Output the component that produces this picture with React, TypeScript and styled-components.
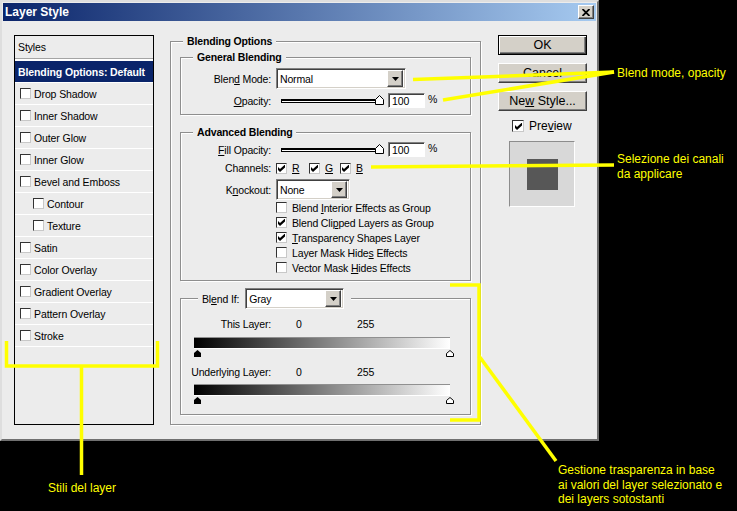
import styled, { createGlobalStyle } from "styled-components";

const GlobalStyle = createGlobalStyle`
  html, body { margin: 0; padding: 0; background: #000; }
  body { font-family: "Liberation Sans", Arial, sans-serif; }
`;

const Page = styled.div`
  position: relative;
  width: 737px;
  height: 511px;
  overflow: hidden;
  background: #000;
`;

const Window = styled.div`
  width: 599px;
  height: 441px;
  box-sizing: border-box;
  padding: 1px;
  background: #ececec;
  border: 2px solid;
  border-color: #dedede #707070 #707070 #dedede;
  display: flex;
  flex-direction: column;
  font-size: 10.5px;
  color: #000;
`;

const TitleBar = styled.div`
  height: 18px;
  display: flex;
  align-items: center;
  justify-content: space-between;
  padding: 0 2px 0 2px;
  background: linear-gradient(to right, #0a246a, #a6caf0);
`;

const Title = styled.span`
  color: #fff;
  font-size: 12px;
  font-weight: bold;
`;

const CloseBtn = styled.div`
  width: 16px;
  height: 14px;
  box-sizing: border-box;
  background: #d4d0c8;
  border: 1px solid;
  border-color: #fff #404040 #404040 #fff;
  box-shadow: inset -1px -1px 0 #808080;
  display: flex;
  align-items: center;
  justify-content: center;
`;

const Body = styled.div`
  flex: 1;
  display: flex;
  align-items: flex-start;
  padding: 14px 0 0 11px;
`;

/* left list of styles */
const StyleList = styled.div`
  width: 140px;
  height: 390px;
  box-sizing: border-box;
  border: 1px solid #000;
  display: flex;
  flex-direction: column;
  letter-spacing: -0.1px;
`;

const ListHeader = styled.div`
  height: 22px;
  display: flex;
  align-items: center;
  padding-left: 3px;
  border-bottom: 1px solid #a4a4a4;
`;

const ListItem = styled.div<{ $selected?: boolean; $indent?: boolean }>`
  height: 21px;
  display: flex;
  align-items: center;
  gap: 3px;
  padding-left: ${(p) => (p.$selected ? 3 : p.$indent ? 18 : 5)}px;
  border-top: ${(p) => (p.$selected ? "2px solid #fff" : "none")};
  border-bottom: 1px solid #fff;
  background: ${(p) => (p.$selected ? "#0a246a" : "transparent")};
  color: ${(p) => (p.$selected ? "#fff" : "#000")};
  font-weight: ${(p) => (p.$selected ? "bold" : "normal")};
`;

/* group boxes */
const Group = styled.fieldset<{ $pad: string; $top?: number }>`
  margin: ${(p) => p.$top ?? 0}px 0 0 0;
  min-width: 0;
  padding: ${(p) => p.$pad};
  border: 1px solid #8e8e8e;
  box-shadow: inset 1px 1px 0 #fff, 1px 1px 0 #fff;
`;

const OuterGroup = styled(Group)`
  width: 311px;
  box-sizing: border-box;
  margin-left: 16px;
  letter-spacing: -0.15px;
`;

const GroupTitle = styled.legend<{ $offset: number }>`
  margin-left: ${(p) => p.$offset}px;
  padding: 0 4px;
  line-height: 12px;
  font-weight: bold;
  background: #ececec;
`;

const BlendIfTitle = styled.legend`
  margin-left: 16px;
  padding: 0 7px 0 4px;
  display: flex;
  align-items: center;
  gap: 6px;
  background: #ececec;
`;

const FormRow = styled.div<{ $top?: number }>`
  display: grid;
  grid-template-columns: 89px auto;
  column-gap: 5px;
  align-items: center;
  margin-top: ${(p) => p.$top ?? 0}px;
`;

const Label = styled.span`
  text-align: right;
  white-space: nowrap;
`;

const Controls = styled.div`
  display: flex;
  align-items: center;
`;

const Key = styled.span`
  text-decoration: underline;
`;

const SelectBox = styled.div<{ $w: number }>`
  width: ${(p) => p.$w}px;
  height: 21px;
  box-sizing: border-box;
  display: flex;
  align-items: center;
  justify-content: space-between;
  background: #fff;
  border: 1px solid;
  border-color: #808080 #fff #fff #808080;
  box-shadow: inset 1px 1px 0 #404040, inset -1px -1px 0 #d4d0c8;
  padding: 2px 2px 2px 3px;
  font-weight: normal;
`;

const DropBtn = styled.div`
  width: 16px;
  height: 17px;
  box-sizing: border-box;
  background: #d4d0c8;
  border: 1px solid;
  border-color: #fff #404040 #404040 #fff;
  box-shadow: inset -1px -1px 0 #808080;
  display: flex;
  align-items: center;
  justify-content: center;
`;

const SliderWrap = styled.div`
  position: relative;
  width: 110px;
  height: 15px;
`;

const Track = styled.div`
  position: absolute;
  left: 5px;
  top: 6px;
  width: 98px;
  height: 4px;
  box-sizing: border-box;
  background: #fff;
  border: 1px solid #000;
  border-top-width: 2px;
`;

const Thumb = styled.svg`
  position: absolute;
  left: 99px;
  top: 2px;
`;

const NumField = styled.div`
  width: 37px;
  height: 15px;
  box-sizing: border-box;
  margin-left: 2px;
  padding: 1px 0 0 3px;
  background: #fff;
  border: 1px solid;
  border-color: #808080 #fff #fff #808080;
  box-shadow: inset 1px 1px 0 #404040;
  display: flex;
  align-items: center;
`;

const Percent = styled.span`
  margin-left: 3px;
  margin-top: -4px;
`;

const CheckBox = styled.span<{ $size: number }>`
  width: ${(p) => p.$size}px;
  height: ${(p) => p.$size}px;
  flex: none;
  box-sizing: border-box;
  background: #fff;
  border: 1px solid;
  border-color: #333 #c8c8c8 #c8c8c8 #333;
  display: flex;
  align-items: center;
  justify-content: center;
`;

const ChannelGrid = styled.div`
  display: grid;
  grid-template-columns: 33px 31px auto;
  height: 12px;
  align-items: center;
`;

const Channel = styled.span`
  display: flex;
  align-items: center;
  gap: 5px;
`;

const CheckList = styled.div`
  padding-left: 94px;
`;

const CheckRow = styled.div`
  height: 15px;
  display: flex;
  align-items: center;
  gap: 5px;
`;

const LevelRow = styled.div<{ $top: number }>`
  height: 14px;
  display: flex;
  align-items: center;
  margin-top: ${(p) => p.$top}px;
`;

const LevelLabel = styled.span`
  width: 89px;
  text-align: right;
  white-space: nowrap;
`;

const LevelValue = styled.span<{ $w: number }>`
  width: ${(p) => p.$w}px;
`;

const Ramp = styled.div<{ $top: number }>`
  width: 256px;
  height: 12px;
  box-sizing: border-box;
  margin: ${(p) => p.$top}px 0 0 12px;
  border-top: 1px solid #909090;
  border-bottom: 1px solid #fff;
  background: linear-gradient(to right, #000, #fff);
`;

const Markers = styled.svg`
  display: block;
  margin: 1px 0 0 12px;
`;

/* right column */
const Side = styled.div`
  width: 89px;
  margin-left: 17px;
  display: flex;
  flex-direction: column;
`;

const Button = styled.div<{ $default?: boolean; $top?: number }>`
  height: 20px;
  box-sizing: border-box;
  margin-top: ${(p) => p.$top ?? 0}px;
  background: #d4d0c8;
  font-size: 12.5px;
  display: flex;
  align-items: center;
  justify-content: center;
  border: 1px solid;
  border-color: ${(p) => (p.$default ? "#000" : "#fff #404040 #404040 #fff")};
  box-shadow: ${(p) =>
    p.$default
      ? "inset 1px 1px 0 #fff, inset -1px -1px 0 #404040, inset -2px -2px 0 #808080"
      : "inset -1px -1px 0 #808080"};
`;

const PreviewRow = styled.div`
  display: flex;
  align-items: center;
  gap: 5px;
  margin: 8px 0 0 14px;
  font-size: 12px;
`;

const PreviewBox = styled.div`
  width: 66px;
  height: 66px;
  box-sizing: border-box;
  margin: 8px 0 0 11px;
  background: #d8d8d8;
  border: 1px solid;
  border-color: #8c8c8c #fff #fff #8c8c8c;
  display: flex;
  align-items: center;
  justify-content: center;
`;

const Swatch = styled.div`
  width: 31px;
  height: 31px;
  background: #575757;
`;

/* yellow notes drawn over the screenshot */
const Overlay = styled.svg`
  position: absolute;
  left: 0;
  top: 0;
  pointer-events: none;
`;

const Note = styled.div<{ $x: number; $y: number }>`
  position: absolute;
  left: ${(p) => p.$x}px;
  top: ${(p) => p.$y}px;
  color: #ffff00;
  font-size: 12px;
  line-height: 14.5px;
  white-space: nowrap;
`;

function Check({ on, size = 11 }: { on?: boolean; size?: number }) {
  return (
    <CheckBox $size={size}>
      {on && (
        <svg width="7" height="7" viewBox="0 0 7 7">
          <path d="M0 2 L2 4 L7 -0.5 L7 2.5 L2 7 L0 5 Z" fill="#000" />
        </svg>
      )}
    </CheckBox>
  );
}

function Select({ width, value }: { width: number; value: string }) {
  return (
    <SelectBox $w={width}>
      <span>{value}</span>
      <DropBtn>
        <svg width="7" height="4" viewBox="0 0 7 4">
          <path d="M0 0 H7 L3.5 4 Z" fill="#000" />
        </svg>
      </DropBtn>
    </SelectBox>
  );
}

function Slider() {
  return (
    <SliderWrap>
      <Track />
      <Thumb width="9" height="10" viewBox="0 0 9 10">
        <path d="M4.5 0.5 L8.5 4.5 V9.5 H0.5 V4.5 Z" fill="#fff" stroke="#000" />
      </Thumb>
    </SliderWrap>
  );
}

function RampMarkers() {
  return (
    <Markers width="262" height="7" viewBox="0 0 262 7">
      <path d="M3.5 0 L7 3 V7 H0 V3 Z" fill="#000" />
      <path d="M256 0.5 L259.5 3.5 V6.5 H252.5 V3.5 Z" fill="#fff" stroke="#000" />
    </Markers>
  );
}

const styleItems: { name: string; indent?: boolean }[] = [
  { name: "Drop Shadow" },
  { name: "Inner Shadow" },
  { name: "Outer Glow" },
  { name: "Inner Glow" },
  { name: "Bevel and Emboss" },
  { name: "Contour", indent: true },
  { name: "Texture", indent: true },
  { name: "Satin" },
  { name: "Color Overlay" },
  { name: "Gradient Overlay" },
  { name: "Pattern Overlay" },
  { name: "Stroke" },
];

export default function App() {
  return (
    <Page>
      <GlobalStyle />
      <Window>
        <TitleBar>
          <Title>Layer Style</Title>
          <CloseBtn>
            <svg width="8" height="7" viewBox="0 0 8 7">
              <path d="M0.5 0 L7.5 7 M7.5 0 L0.5 7" stroke="#000" strokeWidth="1.8" />
            </svg>
          </CloseBtn>
        </TitleBar>

        <Body>
          <StyleList>
            <ListHeader>Styles</ListHeader>
            <ListItem $selected>Blending Options: Default</ListItem>
            {styleItems.map((s) => (
              <ListItem key={s.name} $indent={s.indent}>
                <Check size={11} />
                {s.name}
              </ListItem>
            ))}
          </StyleList>

          <OuterGroup $pad="4px 9px 9px 9px">
            <GroupTitle $offset={3}>Blending Options</GroupTitle>

            <Group $pad="5px 8px 6px 1px">
              <GroupTitle $offset={11}>General Blending</GroupTitle>
              <FormRow>
                <Label>
                  Blen<Key>d</Key> Mode:
                </Label>
                <Select width={130} value="Normal" />
              </FormRow>
              <FormRow $top={4}>
                <Label>
                  <Key>O</Key>pacity:
                </Label>
                <Controls>
                  <Slider />
                  <NumField>100</NumField>
                  <Percent>%</Percent>
                </Controls>
              </FormRow>
            </Group>

            <Group $pad="4px 8px 5px 1px" $top={11}>
              <GroupTitle $offset={11}>Advanced Blending</GroupTitle>
              <FormRow>
                <Label>
                  <Key>F</Key>ill Opacity:
                </Label>
                <Controls>
                  <Slider />
                  <NumField>100</NumField>
                  <Percent>%</Percent>
                </Controls>
              </FormRow>
              <FormRow $top={5}>
                <Label>Channels:</Label>
                <ChannelGrid>
                  <Channel>
                    <Check on />
                    <Key>R</Key>
                  </Channel>
                  <Channel>
                    <Check on />
                    <Key>G</Key>
                  </Channel>
                  <Channel>
                    <Check on />
                    <Key>B</Key>
                  </Channel>
                </ChannelGrid>
              </FormRow>
              <FormRow $top={5}>
                <Label>
                  K<Key>n</Key>ockout:
                </Label>
                <Select width={74} value="None" />
              </FormRow>
              <CheckList>
                <CheckRow>
                  <Check />
                  <span>
                    Blend <Key>I</Key>nterior Effects as Group
                  </span>
                </CheckRow>
                <CheckRow>
                  <Check on />
                  <span>
                    Blend Cli<Key>p</Key>ped Layers as Group
                  </span>
                </CheckRow>
                <CheckRow>
                  <Check on />
                  <span>
                    <Key>T</Key>ransparency Shapes Layer
                  </span>
                </CheckRow>
                <CheckRow>
                  <Check />
                  <span>
                    Layer Mask Hide<Key>s</Key> Effects
                  </span>
                </CheckRow>
                <CheckRow>
                  <Check />
                  <span>
                    Vector Mask <Key>H</Key>ides Effects
                  </span>
                </CheckRow>
              </CheckList>
            </Group>

            <Group $pad="8px 8px 10px 1px" $top={7}>
              <BlendIfTitle>
                <span>
                  Bl<Key>e</Key>nd If:
                </span>
                <Select width={99} value="Gray" />
              </BlendIfTitle>
              <LevelRow $top={0}>
                <LevelLabel>This Layer:</LevelLabel>
                <LevelValue $w={25} />
                <LevelValue $w={61}>0</LevelValue>
                <span>255</span>
              </LevelRow>
              <Ramp $top={6} />
              <RampMarkers />
              <LevelRow $top={8}>
                <LevelLabel>Underlying Layer:</LevelLabel>
                <LevelValue $w={25} />
                <LevelValue $w={61}>0</LevelValue>
                <span>255</span>
              </LevelRow>
              <Ramp $top={5} />
              <RampMarkers />
            </Group>
          </OuterGroup>

          <Side>
            <Button $default>OK</Button>
            <Button $top={8}>Cancel</Button>
            <Button $top={8}>
              <span>
                Ne<Key>w</Key> Style...
              </span>
            </Button>
            <PreviewRow>
              <Check on size={12} />
              <span>
                Pre<Key>v</Key>iew
              </span>
            </PreviewRow>
            <PreviewBox>
              <Swatch />
            </PreviewBox>
          </Side>
        </Body>
      </Window>

      <Overlay width="737" height="511" viewBox="0 0 737 511">
        <g stroke="#ffff00" strokeWidth="3.5" fill="none">
          <path d="M413 79.5 L614 72" />
          <path d="M443 100 L614 72" />
          <path d="M371 167 L614 165" />
          <path d="M6.5 341 V366 H157.5 V341" />
          <path d="M81.5 366 V475" />
          <path d="M450 285 H479 V420 H450" />
          <path d="M479 356 L556 461" />
        </g>
      </Overlay>
      <Note $x={617} $y={66}>Blend mode, opacity</Note>
      <Note $x={617} $y={152}>
        Selezione dei canali
        <br />
        da applicare
      </Note>
      <Note $x={48} $y={481}>Stili del layer</Note>
      <Note $x={558} $y={463}>
        Gestione trasparenza in base
        <br />
        ai valori del layer selezionato e
        <br />
        dei layers sotostanti
      </Note>
    </Page>
  );
}
